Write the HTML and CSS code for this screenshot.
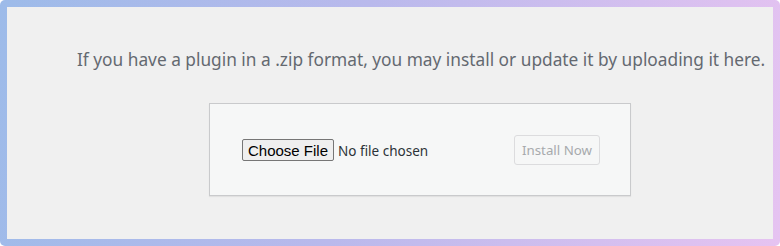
FILE: index.html
```html
<!DOCTYPE html>
<html lang="en">
<head>
<meta charset="utf-8">
<title>Upload Plugin</title>
<link rel="stylesheet" href="styles.css">
</head>
<body>
<div class="frame">
  <div class="panel">
    <p class="install-help">If you have a plugin in a .zip format, you may install or update it by uploading it here.</p>
    <form class="upload-form">
      <input type="file" class="file-input" name="pluginzip">
      <button type="submit" class="install-btn" disabled>Install Now</button>
    </form>
  </div>
</div>
</body>
</html>
```

FILE: styles.css
```css
html, body {
  margin: 0;
  padding: 0;
  background: #ffffff;
}

.frame {
  box-sizing: border-box;
  width: 780px;
  height: 246px;
  padding: 7px;
  border-radius: 5px;
  background: linear-gradient(100deg, #9dbbe9 0%, #b9b9ec 45%, #e6c3f1 100%);
}

.panel {
  box-sizing: border-box;
  height: 100%;
  background: #f0f0f0;
  padding: 41px 0 0 70px;
  font-family: "Noto Sans", "Open Sans", sans-serif;
}

.install-help {
  margin: 0;
  font-size: 17.3px;
  line-height: 24px;
  color: #646970;
  white-space: nowrap;
}

.upload-form {
  box-sizing: border-box;
  width: 422px;
  height: 93px;
  margin: 31px 0 0 132px;
  padding: 0 30px 0 32px;
  display: flex;
  align-items: center;
  justify-content: space-between;
  background: #f6f7f7;
  border: 1px solid #c9cacc;
  box-shadow: 0 1px 1px rgba(0, 0, 0, 0.06);
}

.file-input {
  flex: 0 0 auto;
  width: 200px;
  font-family: "Noto Sans", sans-serif;
  font-size: 13.5px;
  color: #2c3338;
  margin: 1px 0 0 0;
}

.file-input::file-selector-button {
  font-family: "Liberation Sans", Arial, sans-serif;
  font-size: 15px;
  color: #000;
  height: 22px;
  padding: 0 5px;
  margin-right: 4px;
  background: #efefef;
  border: 1px solid #767676;
  border-radius: 2px;
}

.install-btn {
  flex: 0 0 auto;
  box-sizing: border-box;
  width: 86px;
  height: 30px;
  padding: 0;
  white-space: nowrap;
  font-family: "Noto Sans", sans-serif;
  font-size: 13.3px;
  color: #a7aaad;
  background: #f6f7f7;
  border: 1px solid #dcdcde;
  border-radius: 3px;
}
```
